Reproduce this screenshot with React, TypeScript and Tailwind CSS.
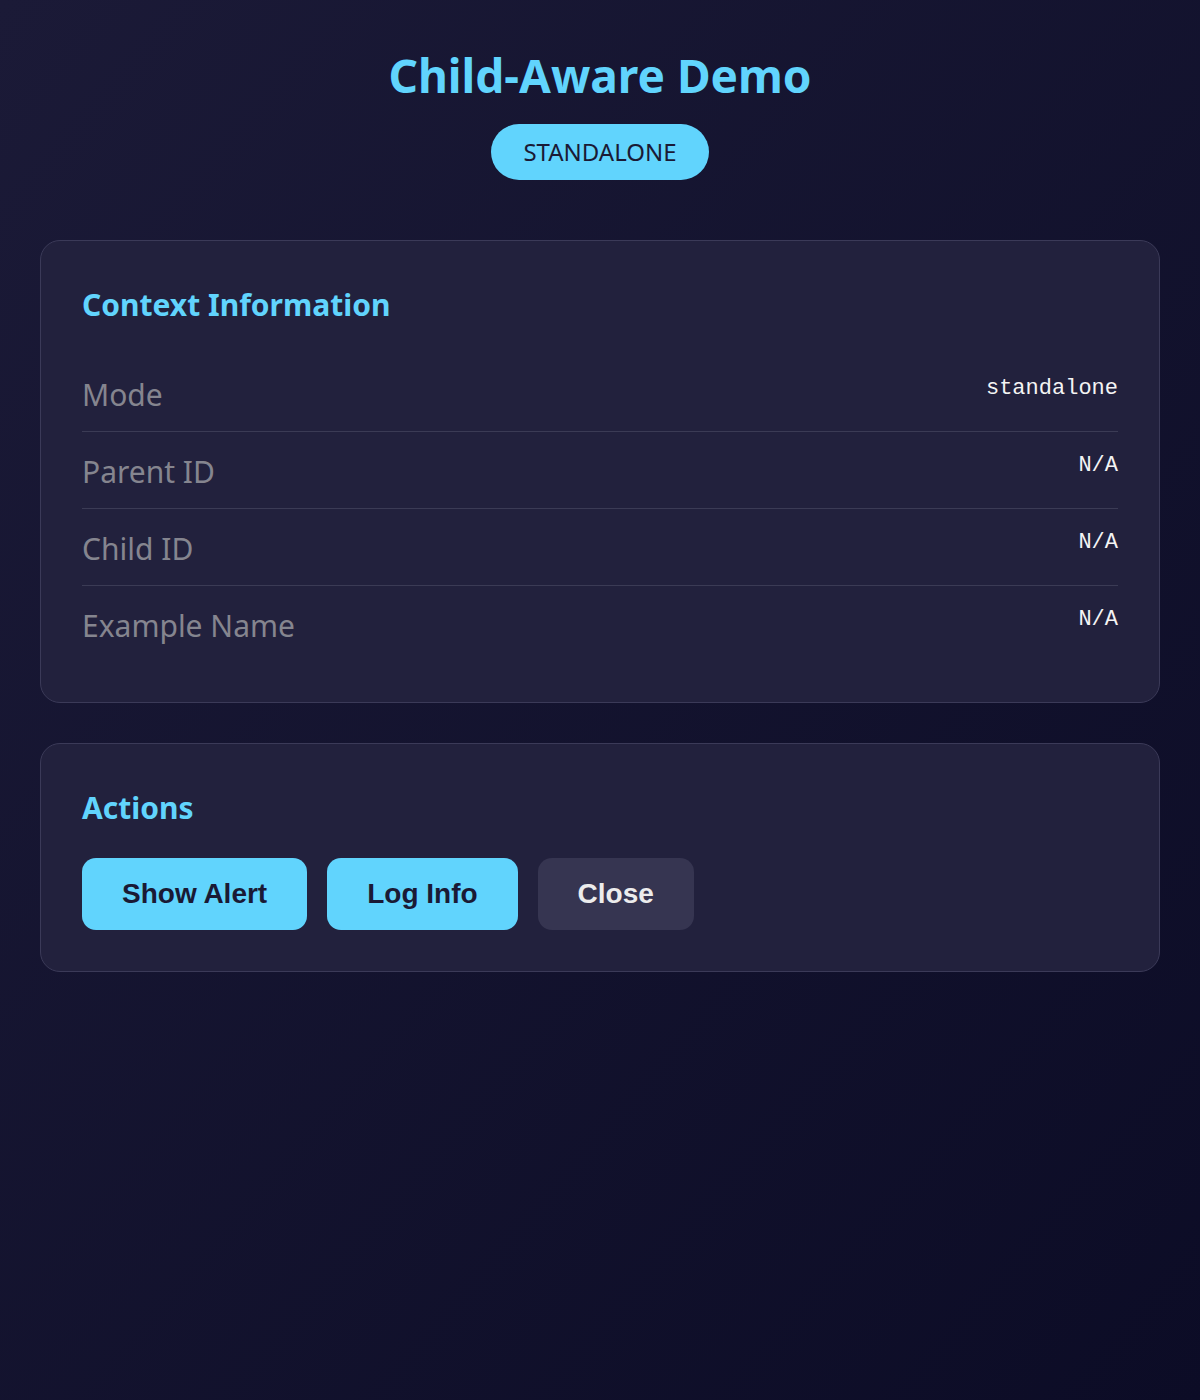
const rows = [
  { label: "Mode", value: "standalone" },
  { label: "Parent ID", value: "N/A" },
  { label: "Child ID", value: "N/A" },
  { label: "Example Name", value: "N/A" },
];

const sans = "font-['Noto_Sans',_'Open_Sans',_sans-serif]";

export default function App() {
  return (
    <div
      className={`min-h-[1400px] bg-gradient-to-br from-[#1b1a37] to-[#0c0c26] px-10 pt-[47px] ${sans}`}
    >
      <header className="flex flex-col items-center">
        <h1 className="text-[46px] font-bold leading-[56px] text-[#61d4fd]">
          Child-Aware Demo
        </h1>
        <span className="mt-[21px] flex h-[56px] items-center rounded-full bg-[#61d4fd] px-[32px] text-[24px] text-[#1a1a35]">
          STANDALONE
        </span>
      </header>

      <section className="mt-[60px] rounded-[20px] border border-[#3b3a58] bg-[#22213d] px-[41px] py-10">
        <h2 className="mb-[26px] text-[30px] font-bold leading-[48px] text-[#61d4fd]">
          Context Information
        </h2>
        <div>
          {rows.map((row, i) => (
            <div
              key={row.label}
              className={`flex items-start justify-between pt-[18px] pb-[14px] ${
                i < rows.length - 1 ? "border-b border-[#3b3b55]" : ""
              }`}
            >
              <span className="text-[30px] leading-[44px] text-[#85858f]">
                {row.label}
              </span>
              <span className="font-['Liberation_Mono',_monospace] text-[22px] leading-[32px] text-[#f4f4f4]">
                {row.value}
              </span>
            </div>
          ))}
        </div>
      </section>

      <section className="mt-10 rounded-[20px] border border-[#3b3a58] bg-[#22213d] px-[41px] pt-10 pb-[41px]">
        <h2 className="mb-[26px] text-[30px] font-bold leading-[48px] text-[#61d4fd]">
          Actions
        </h2>
        <div className="flex gap-5 font-['Liberation_Sans',_Arial,_sans-serif] text-[28px] font-bold">
          <button className="h-[72px] rounded-[14px] bg-[#61d4fd] px-10 text-[#1a1a35]">
            Show Alert
          </button>
          <button className="h-[72px] rounded-[14px] bg-[#61d4fd] px-10 text-[#1a1a35]">
            Log Info
          </button>
          <button className="h-[72px] rounded-[14px] bg-[#363551] px-10 text-[#ececec]">
            Close
          </button>
        </div>
      </section>
    </div>
  );
}
